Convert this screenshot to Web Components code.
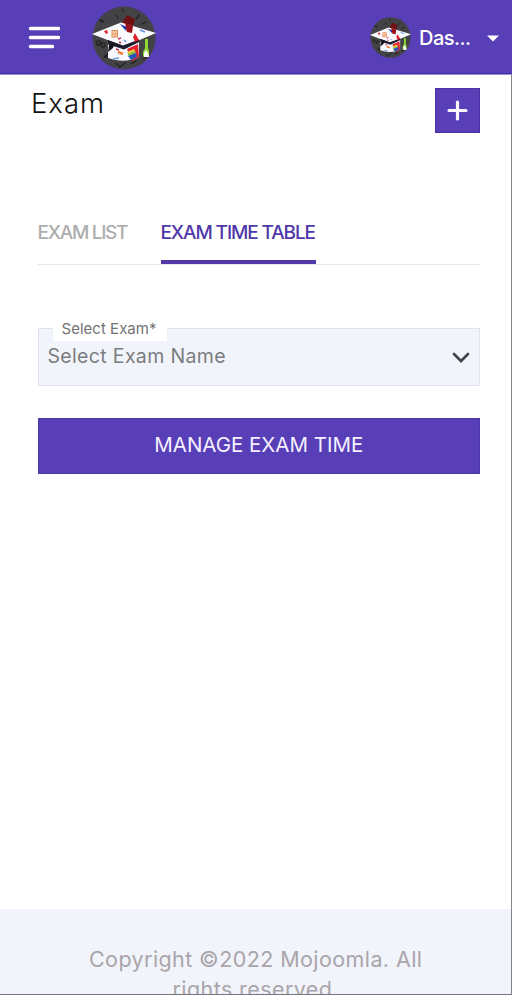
<!DOCTYPE html>
<html lang="en">
<head>
<meta charset="utf-8">
<title>Exam</title>
<style>
html,body{margin:0;height:995px;overflow:hidden;background:#fff}
body{font-family:Inter,"Open Sans",sans-serif}
</style>
</head>
<body>
<exam-page></exam-page>
<template id="cap">
<style>:host{display:block;flex:none}svg{display:block;width:100%;height:100%}</style>
<svg viewBox="0 0 64 64">
<circle cx="32" cy="32" r="31.5" fill="#434346"/>
<g stroke="#232325" stroke-width="1.3" fill="none" stroke-linecap="round">
<path d="M24 9l2 3M47 9l-3 4M50 18l4-2M16 52l-4-2M24 57l4 4M33 57l-5 4M44 55l-5 3M55 51l-4 2M30 3l2 3"/>
<circle cx="6.500" cy="37" r="2"/><circle cx="11" cy="39" r="2"/><path d="M8 14l3 1.500M20 44l-7 7" stroke-width="2"/></g>
<path d="M30 17l5-8 8 4-3 11z" fill="#6d1013"/>
<path d="M0 28l29-11.500 7 2 28 8.500-28 12-5 1z" fill="#fafbff"/>
<path d="M16 36l15 6 16-6v15q-15 7-31 1z" fill="#f7f9ff"/>
<path d="M16 34l15 5.500 16-6v2.500l-15 7.500-6-2-10-3z" fill="#1e1b2c"/>
<path d="M28 18l7 3-1 4zM38 42l4-1-1 3z" fill="#2337b4"/>
<path d="M33 17l8 3-1 7-5-1z" fill="#981015"/>
<path d="M41 31l2-4 4 7-4 2zM12 25l3-1 1 3-2 1zM35 43l11-5 1 13-7 4z" fill="#e32230"/>
<path d="M35 46l7-3 2 4-7 3z" fill="#e9cd3e"/><path d="M36 50l8-3 1 4-6 3z" fill="#2657bd"/><path d="M36 49l7-3" stroke="#6bbd49" stroke-width="1.500"/>
<rect x="20" y="24.500" width="5.500" height="6.500" fill="#ffd7b5" stroke="#e08a55"/>
<path d="M20 28h6M23 25v6" stroke="#e08a55" stroke-width=".7"/>
<path d="M48 24l5 2M32 34l2 2" stroke="#668fe0" stroke-width="1.500"/>
<path d="M26 33l3-1M27 36l2 1M24 43l3 1" stroke="#cf2a55" stroke-width="1.500"/>
<path d="M26 46l5 2" stroke="#ef7f37" stroke-width="2.500"/><path d="M21 53l6-1" stroke="#6c9bd4" stroke-width="1.500"/>
<path d="M17 39l6-2-2 5-5 4z" fill="#141318"/>
<path d="M53 33h3v9l1 3v6h-5l-1-1v-4l2-4z" fill="#8ed936"/>
<path d="M52 47l2-3 2 3 1 4h-5z" fill="#fff"/>
</svg>
</template>
<template id="bar">
<style>
:host{display:flex;box-sizing:border-box;height:75px;background:#583fb8;border-bottom:1px solid #9b8bd0;box-shadow:inset 0 -1px #47319c;align-items:center;padding:1px 13px 0 28px;color:#fff}
.menu{width:32px;height:24px;flex:none}
.logo{width:64px;height:64px;margin-left:32px}
.user{display:flex;align-items:center;margin-left:auto}
.avatar{width:41px;height:41px;margin-right:8px}
fit-text{font-size:20px;font-weight:500;line-height:28px}
.caret{width:12px;height:7px;margin-left:16px;margin-top:2px}
</style>
<svg class="menu" viewBox="0 0 32 24"><path d="M2.500 2.500h28M2.500 11.500h28M2.500 20.500h22" stroke="#fff" stroke-width="3.500" stroke-linecap="round"/></svg>
<cap-logo class="logo"></cap-logo>
<div class="user"><cap-logo class="avatar"></cap-logo><fit-text width="52">Das...</fit-text>
<svg class="caret" viewBox="0 0 12 7"><path d="M0 .5h12L6 6.500z" fill="#fff"/></svg></div>
</template>
<template id="tabs">
<style>
:host{display:flex;gap:32px;height:54px;box-sizing:border-box;border-bottom:1px solid #e9e9ec}
div{height:53px;box-sizing:border-box;color:#adadad;font-size:19px;font-weight:500;line-height:44px}
.on{color:#5038a8;border-bottom:4px solid #5038a8}
</style>
<div><fit-text width="91">EXAM LIST</fit-text></div><div class="on"><fit-text width="155.500">EXAM TIME TABLE</fit-text></div>
</template>
<template id="sel">
<style>
:host{display:flex;position:relative;box-sizing:border-box;height:58px;background:#f1f4fa;border:1px solid #dfe3ea;align-items:center;justify-content:space-between;padding:0 9px 2px 9px;color:#7b7c80}
.value{font-size:19.500px;line-height:28px}
.label{position:absolute;left:14px;top:-9px;height:21px;width:114px;background:#fff;box-sizing:border-box;padding-left:9px;font-size:15px;line-height:17px;color:#737373}
svg{width:18px;height:12px;margin-top:4px}
</style>
<div class="label"><fit-text width="95"><slot name="label"></slot></fit-text></div>
<div class="value"><fit-text width="178"><slot></slot></fit-text></div>
<svg viewBox="0 0 18 12"><path d="M2 2l7 7 7-7" fill="none" stroke="#414449" stroke-width="2.700" stroke-linecap="round"/></svg>
</template>
<template id="page">
<style>
:host{display:flex;flex-direction:column;position:relative;width:512px;height:995px;overflow:hidden}
nav-bar{flex:none}
main{flex:1;display:flex;flex-direction:column;padding:13px 31px 0 37.500px;border-right:1px solid #858585}
.head{display:flex;justify-content:space-between;height:123px;margin-left:-6.500px}
h1{margin:0;font-size:27.500px;font-weight:300;line-height:31px;color:#111}
.add{display:flex;align-items:center;justify-content:center;width:45px;height:45px;background:#583fb8;box-shadow:inset 0 0 0 1px #4a339f}
.add svg{width:21px;height:21px}
form-select{margin-top:63px}
.go{margin-top:31.500px;height:56.500px;flex:none;display:flex;align-items:center;justify-content:center;background:#583fb8;box-shadow:inset 0 0 0 1px #4e37a8;color:#f5f0ff;font-size:20.500px;line-height:26px;padding-bottom:1px;box-sizing:border-box}
footer{box-sizing:border-box;flex:none;height:86px;background:#f1f4fa;border-right:1px solid #858585;border-bottom:1px solid #77777b;padding-top:36px;overflow:hidden;text-align:center;color:#aaa5aa;font-size:21.500px;line-height:29.500px}
footer div{height:29.500px}
</style>
<nav-bar></nav-bar>
<main>
<div class="head"><h1><fit-text width="73">Exam</fit-text></h1>
<div class="add"><svg viewBox="0 0 21 21"><path d="M10.500 2v17M2 10.500h17" stroke="#fcf6ff" stroke-width="3.200" stroke-linecap="round"/></svg></div></div>
<tab-strip></tab-strip>
<form-select><span slot="label">Select Exam*</span>Select Exam Name</form-select>
<div class="go"><fit-text width="209">MANAGE EXAM TIME</fit-text></div>
</main>
<footer><div><fit-text width="333">Copyright ©2022 Mojoomla. All</fit-text></div><div><fit-text width="166">rights reserved.</fit-text></div></footer>
</template>
<script>
const stamp = id => class extends HTMLElement {
  constructor() {
    super();
    this.attachShadow({mode: "open"}).append(document.getElementById(id).content.cloneNode(true));
  }
};
// Spreads letter spacing so a single line occupies its nominal width.
class FitText extends HTMLElement {
  constructor() {
    super();
    this.attachShadow({mode: "open"}).innerHTML =
      "<style>:host{display:inline-block;white-space:nowrap}span{display:inline-block}</style><span><slot></slot></span>";
  }
  fit() {
    const line = this.shadowRoot.querySelector("span"), inner = this.querySelector("slot");
    const text = inner ? inner.assignedNodes().map(n => n.textContent).join("") : this.textContent;
    const gap = (Number(this.getAttribute("width")) - line.getBoundingClientRect().width) / (text.trim().length - 1);
    line.style.letterSpacing = gap + "px";
    line.style.marginRight = -gap + "px";
  }
}
customElements.define("fit-text", FitText);
customElements.define("cap-logo", stamp("cap"));
customElements.define("nav-bar", stamp("bar"));
customElements.define("tab-strip", stamp("tabs"));
customElements.define("form-select", stamp("sel"));
customElements.define("exam-page", stamp("page"));
const visit = root => root.querySelectorAll("*").forEach(el => {
  if (el instanceof FitText) el.fit();
  else if (el.shadowRoot) visit(el.shadowRoot);
});
visit(document);
</script>
</body>
</html>
